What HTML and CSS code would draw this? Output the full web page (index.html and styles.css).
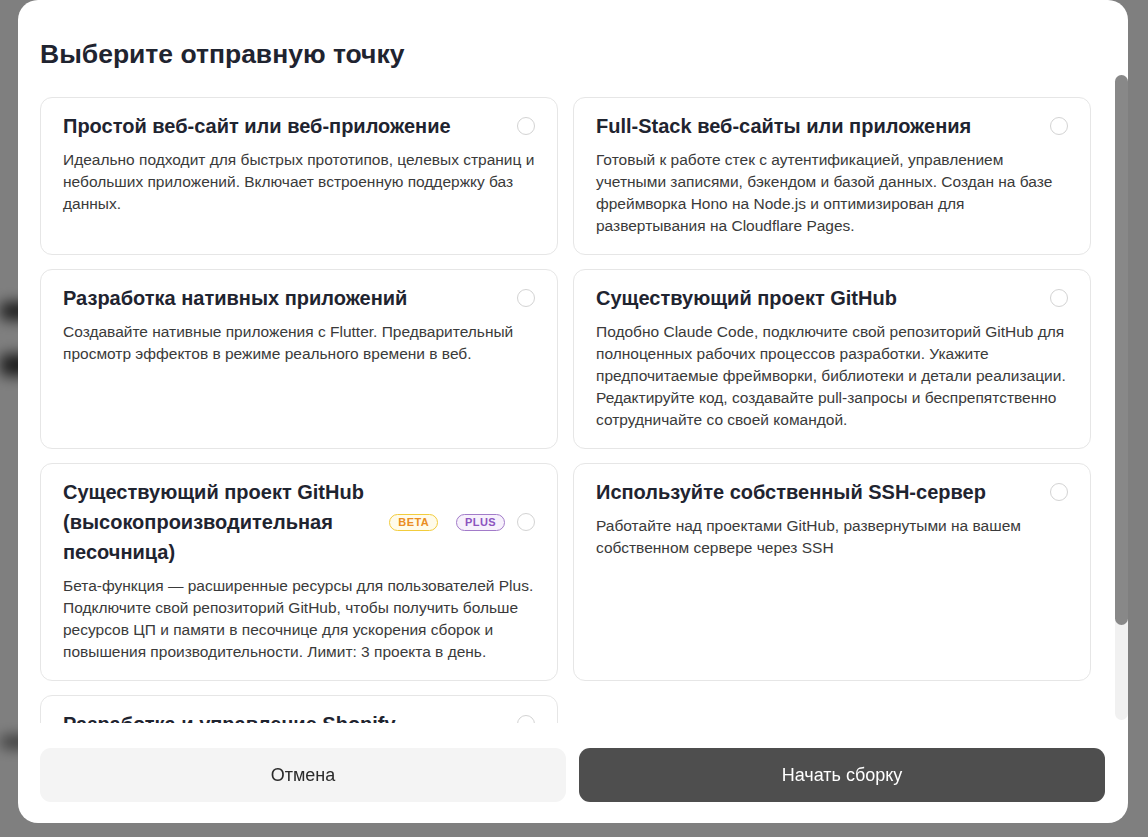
FILE: index.html
```html
<!doctype html>
<html lang="ru">
<head>
<meta charset="UTF-8">
<title>Выберите отправную точку</title>
<link rel="stylesheet" href="styles.css">
</head>
<body>

<!-- page under the dialog, only soft shapes show through -->
<div class="page-behind">
	<div class="ghost ghost-one"></div>
	<div class="ghost ghost-two"></div>
	<div class="ghost ghost-three"></div>
</div>

<div class="overlay">
	<div class="modal">
		<h2 class="modal-title">Выберите отправную точку</h2>

		<div class="modal-body">
			<div class="scroll-content">
				<div class="option-grid">

					<div class="option">
						<div class="option-head">
							<h3 class="option-title">Простой веб-сайт или веб-приложение</h3>
							<span class="radio"></span>
						</div>
						<p class="option-text">Идеально подходит для быстрых прототипов, целевых страниц и небольших приложений. Включает встроенную поддержку баз данных.</p>
					</div>

					<div class="option">
						<div class="option-head">
							<h3 class="option-title">Full-Stack веб-сайты или приложения</h3>
							<span class="radio"></span>
						</div>
						<p class="option-text">Готовый к работе стек с аутентификацией, управлением учетными записями, бэкендом и базой данных. Создан на базе фреймворка Hono на Node.js и оптимизирован для развертывания на Cloudflare Pages.</p>
					</div>

					<div class="option">
						<div class="option-head">
							<h3 class="option-title">Разработка нативных приложений</h3>
							<span class="radio"></span>
						</div>
						<p class="option-text">Создавайте нативные приложения с Flutter. Предварительный просмотр эффектов в режиме реального времени в веб.</p>
					</div>

					<div class="option">
						<div class="option-head">
							<h3 class="option-title">Существующий проект GitHub</h3>
							<span class="radio"></span>
						</div>
						<p class="option-text">Подобно Claude Code, подключите свой репозиторий GitHub для полноценных рабочих процессов разработки. Укажите предпочитаемые фреймворки, библиотеки и детали реализации. Редактируйте код, создавайте pull-запросы и беспрепятственно сотрудничайте со своей командой.</p>
					</div>

					<div class="option">
						<div class="option-head">
							<h3 class="option-title">Существующий проект GitHub (высокопроизводительная песочница)</h3>
							<div class="badges">
								<span class="badge badge-beta">BETA</span>
								<span class="badge badge-plus">PLUS</span>
							</div>
							<span class="radio"></span>
						</div>
						<p class="option-text">Бета-функция — расширенные ресурсы для пользователей Plus. Подключите свой репозиторий GitHub, чтобы получить больше ресурсов ЦП и памяти в песочнице для ускорения сборок и повышения производительности. Лимит: 3 проекта в день.</p>
					</div>

					<div class="option">
						<div class="option-head">
							<h3 class="option-title">Используйте собственный SSH-сервер</h3>
							<span class="radio"></span>
						</div>
						<p class="option-text">Работайте над проектами GitHub, развернутыми на вашем собственном сервере через SSH</p>
					</div>

					<div class="option">
						<div class="option-head">
							<h3 class="option-title">Разработка и управление Shopify</h3>
							<span class="radio"></span>
						</div>
						<p class="option-text">Создавайте и настраивайте магазины Shopify: темы, приложения и интеграции с управлением товарами и заказами.</p>
					</div>

				</div>
			</div>
			<div class="scrollbar"><div class="scrollbar-thumb"></div></div>
		</div>

		<div class="modal-footer">
			<button class="btn btn-cancel" type="button">Отмена</button>
			<button class="btn btn-start" type="button">Начать сборку</button>
		</div>
	</div>
</div>

</body>
</html>
```

FILE: styles.css
```css
html, body {
	margin: 0;
	height: 100%;
	overflow: hidden;
}

body {
	background-color: white;
	font-family: "Liberation Sans", Arial, sans-serif;
}

/*blurred leftovers of the page behind the dialog*/
.page-behind {
	padding-top: 302px;
	filter: blur(7px);
}

.ghost {
	width: 90px;
	height: 18px;
	background: #3a3a3a;
	border-radius: 6px;
}

.ghost-two {
	margin-top: 34px;
	height: 22px;
}

.ghost-three {
	margin-top: 360px;
	height: 12px;
	background: #6a6a6a;
}

.overlay {
	position: fixed;
	inset: 0;
	background: rgba(0, 0, 0, 0.5);
	display: flex;
	align-items: flex-start;
	padding-left: 18px;
}

.modal {
	width: 1110px;
	height: 823px;
	box-sizing: border-box;
	background: white;
	border-radius: 20px;
	padding: 36px 0 21px 22px;
	display: flex;
	flex-direction: column;
}

.modal-title {
	margin: 0 0 3px 0;
	font-size: 26.5px;
	line-height: 36px;
	font-weight: bold;
	color: #1f2430;
}

.modal-body {
	height: 648px;
	display: flex;
}

.scroll-content {
	flex: 1;
	overflow: hidden;
	padding: 22px 24px 0 0;
}

.scrollbar {
	flex: none;
	width: 13px;
	height: 645px;
	background: #f1f1f1;
	border-radius: 7px;
}

.scrollbar-thumb {
	height: 550px;
	background: #888;
	border-radius: 7px;
}

.option-grid {
	display: grid;
	grid-template-columns: 1fr 1fr;
	column-gap: 15px;
	row-gap: 14px;
}

.option {
	border: 1px solid #e6e6e6;
	border-radius: 12px;
	padding: 13px 22px 17px 22px;
}

.option-head {
	display: flex;
	align-items: center;
	gap: 12px;
}

.option-title {
	flex: 1;
	margin: 0;
	font-size: 20px;
	line-height: 30px;
	font-weight: bold;
	color: #1f2430;
}

.option-text {
	margin: 8px 0 0 0;
	font-size: 15.5px;
	line-height: 22px;
	color: #3a3a3a;
}

.radio {
	flex: none;
	width: 16px;
	height: 16px;
	border: 1px solid #d3d3d3;
	border-radius: 50%;
	margin-left: auto;
}

.badges {
	display: flex;
	gap: 18px;
}

.badge {
	font-size: 11px;
	font-weight: bold;
	letter-spacing: 0.4px;
	line-height: 15px;
	padding: 0 8px;
	border-radius: 10px;
}

.badge-beta {
	color: #ea8d22;
	background: #fffbea;
	border: 1px solid #f2cc3c;
}

.badge-plus {
	color: #8d54bf;
	background: #f7f1fc;
	border: 1px solid #a27bc9;
}

.modal-footer {
	margin-top: 25px;
	padding-right: 23px;
	display: grid;
	grid-template-columns: 1fr 1fr;
	gap: 13px;
}

.btn {
	height: 54px;
	border: none;
	border-radius: 11px;
	font-family: "Liberation Sans", Arial, sans-serif;
	font-size: 18px;
	cursor: pointer;
}

.btn-cancel {
	background: #f4f4f4;
	color: #2b2b2b;
}

.btn-start {
	background: #4e4e4e;
	color: white;
}
```
